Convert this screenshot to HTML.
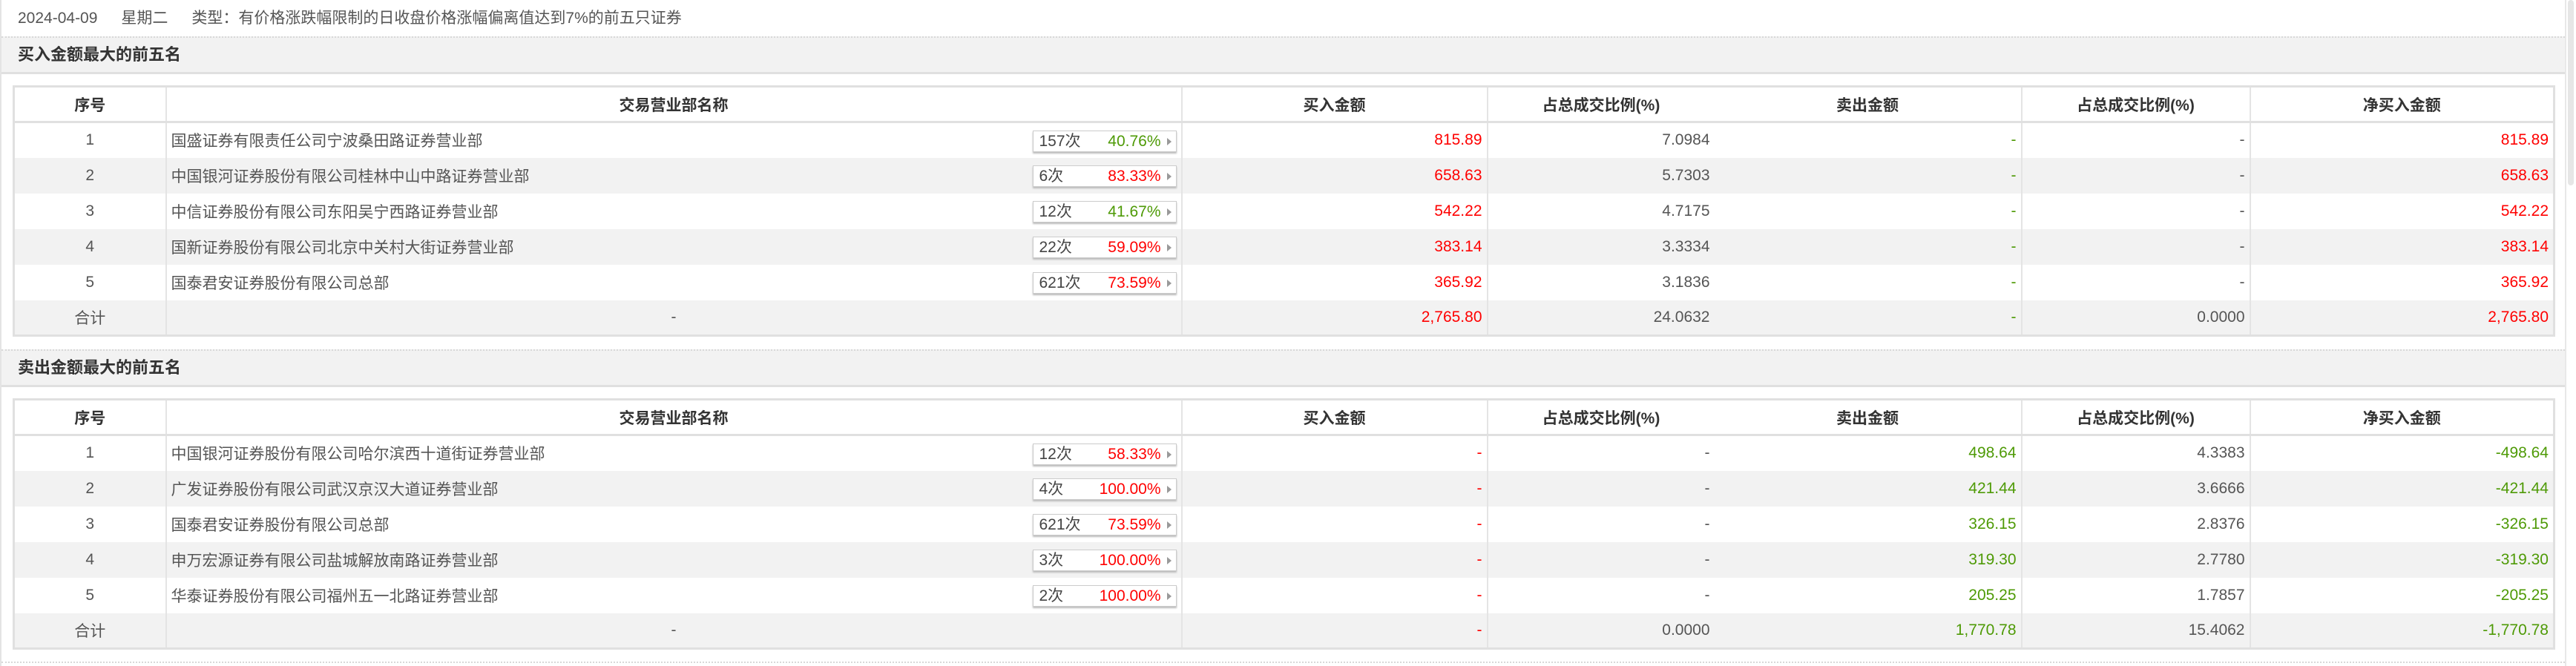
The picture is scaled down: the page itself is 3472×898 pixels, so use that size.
<!DOCTYPE html>
<html><head><meta charset="utf-8"><style>
*{margin:0;padding:0;box-sizing:border-box}
html,body{width:3472px;height:898px;overflow:hidden;background:#fff}
body{font-family:"Liberation Sans","Noto Sans CJK SC",sans-serif;color:#555;font-size:21px;position:relative}
.lb{position:absolute;left:0;top:0;width:2px;height:898px;background:#e4e4e4}
.sb{position:absolute;right:0;top:0;width:15px;height:898px;background:#fff;border-left:2px solid #e8e8e8}
.sb i{position:absolute;left:2px;top:0;width:8px;height:250px;background:#e6e6e6;border-radius:4px}
.top{position:absolute;left:24px;top:0;height:50px;line-height:50px;color:#555;font-size:21px}
.top span{margin-right:32px}
.sec{position:absolute;left:2px;right:15px;height:51px;background:#f2f2f2;border-top:2px dotted #d8d8d8;border-bottom:3px solid #e0e0e0;font-weight:bold;color:#333;font-size:22px;line-height:46px;padding-left:22px}
table{position:absolute;left:17px;width:3424px;border-collapse:collapse;table-layout:fixed;border:3px solid #e0e0e0;border-bottom-width:3px}
td,th{height:48px;padding:0 6px;white-space:nowrap;overflow:hidden}
th{font-weight:bold;color:#333;font-size:21px;text-align:center;border-bottom:3px solid #e0e0e0}
tr:nth-child(odd) td{background:#f2f2f2}
.c1{text-align:center;border-right:2px solid #e4e4e4}
.c2{text-align:left;border-right:2px solid #e4e4e4;position:relative}
.n{text-align:right}
.br{border-right:2px solid #e4e4e4}
.r{color:#f00}.g{color:#4e9a06}
.bd{position:absolute;right:6px;top:10px;width:194px;height:29px;border:1px solid #ccc;background:#fff;box-shadow:0 2px 2px #bbb;font-size:21px;line-height:27px;padding-left:8px;color:#444}
.bd b{font-weight:normal;position:absolute;right:20px;top:0}
.bd u{position:absolute;right:6px;top:9px;width:0;height:0;border-left:6px solid #999;border-top:5px solid transparent;border-bottom:5px solid transparent}
.hd{position:absolute;left:2px;right:15px;height:2px;border-top:2px dotted #d8d8d8}
</style></head><body>
<div class="lb"></div>
<div class="top"><span>2024-04-09</span><span>星期二</span>类型：有价格涨跌幅限制的日收盘价格涨幅偏离值达到7%的前五只证券</div>
<div class="sec" style="top:49px">买入金额最大的前五名</div>
<table style="top:115px">
<colgroup><col style="width:205px"><col style="width:1369px"><col style="width:412px"><col style="width:306px"><col style="width:414px"><col style="width:308px"><col style="width:410px"></colgroup>
<tr><th class="br">序号</th><th class="br">交易营业部名称</th><th class="br">买入金额</th><th>占总成交比例(%)</th><th class="br">卖出金额</th><th class="br">占总成交比例(%)</th><th>净买入金额</th></tr>
<tr><td class="c1">1</td><td class="c2">国盛证券有限责任公司宁波桑田路证券营业部<div class="bd">157次<b class="g">40.76%</b><u></u></div></td><td class="n r br">815.89</td><td class="n">7.0984</td><td class="n g br">-</td><td class="n br">-</td><td class="n r">815.89</td></tr>
<tr><td class="c1">2</td><td class="c2">中国银河证券股份有限公司桂林中山中路证券营业部<div class="bd">6次<b class="r">83.33%</b><u></u></div></td><td class="n r br">658.63</td><td class="n">5.7303</td><td class="n g br">-</td><td class="n br">-</td><td class="n r">658.63</td></tr>
<tr><td class="c1">3</td><td class="c2">中信证券股份有限公司东阳吴宁西路证券营业部<div class="bd">12次<b class="g">41.67%</b><u></u></div></td><td class="n r br">542.22</td><td class="n">4.7175</td><td class="n g br">-</td><td class="n br">-</td><td class="n r">542.22</td></tr>
<tr><td class="c1">4</td><td class="c2">国新证券股份有限公司北京中关村大街证券营业部<div class="bd">22次<b class="r">59.09%</b><u></u></div></td><td class="n r br">383.14</td><td class="n">3.3334</td><td class="n g br">-</td><td class="n br">-</td><td class="n r">383.14</td></tr>
<tr><td class="c1">5</td><td class="c2">国泰君安证券股份有限公司总部<div class="bd">621次<b class="r">73.59%</b><u></u></div></td><td class="n r br">365.92</td><td class="n">3.1836</td><td class="n g br">-</td><td class="n br">-</td><td class="n r">365.92</td></tr>
<tr><td class="c1">合计</td><td class="c2" style="text-align:center">-</td><td class="n r br">2,765.80</td><td class="n">24.0632</td><td class="n g br">-</td><td class="n br">0.0000</td><td class="n r">2,765.80</td></tr>
</table>
<div class="sec" style="top:471px">卖出金额最大的前五名</div>
<table style="top:537px">
<colgroup><col style="width:205px"><col style="width:1369px"><col style="width:412px"><col style="width:306px"><col style="width:414px"><col style="width:308px"><col style="width:410px"></colgroup>
<tr><th class="br">序号</th><th class="br">交易营业部名称</th><th class="br">买入金额</th><th>占总成交比例(%)</th><th class="br">卖出金额</th><th class="br">占总成交比例(%)</th><th>净买入金额</th></tr>
<tr><td class="c1">1</td><td class="c2">中国银河证券股份有限公司哈尔滨西十道街证券营业部<div class="bd">12次<b class="r">58.33%</b><u></u></div></td><td class="n r br">-</td><td class="n">-</td><td class="n g br">498.64</td><td class="n br">4.3383</td><td class="n g">-498.64</td></tr>
<tr><td class="c1">2</td><td class="c2">广发证券股份有限公司武汉京汉大道证券营业部<div class="bd">4次<b class="r">100.00%</b><u></u></div></td><td class="n r br">-</td><td class="n">-</td><td class="n g br">421.44</td><td class="n br">3.6666</td><td class="n g">-421.44</td></tr>
<tr><td class="c1">3</td><td class="c2">国泰君安证券股份有限公司总部<div class="bd">621次<b class="r">73.59%</b><u></u></div></td><td class="n r br">-</td><td class="n">-</td><td class="n g br">326.15</td><td class="n br">2.8376</td><td class="n g">-326.15</td></tr>
<tr><td class="c1">4</td><td class="c2">申万宏源证券有限公司盐城解放南路证券营业部<div class="bd">3次<b class="r">100.00%</b><u></u></div></td><td class="n r br">-</td><td class="n">-</td><td class="n g br">319.30</td><td class="n br">2.7780</td><td class="n g">-319.30</td></tr>
<tr><td class="c1">5</td><td class="c2">华泰证券股份有限公司福州五一北路证券营业部<div class="bd">2次<b class="r">100.00%</b><u></u></div></td><td class="n r br">-</td><td class="n">-</td><td class="n g br">205.25</td><td class="n br">1.7857</td><td class="n g">-205.25</td></tr>
<tr><td class="c1">合计</td><td class="c2" style="text-align:center">-</td><td class="n r br">-</td><td class="n">0.0000</td><td class="n g br">1,770.78</td><td class="n br">15.4062</td><td class="n g">-1,770.78</td></tr>
</table>
<div class="hd" style="top:892px"></div>
<div class="sb"><i></i></div>
</body></html>
